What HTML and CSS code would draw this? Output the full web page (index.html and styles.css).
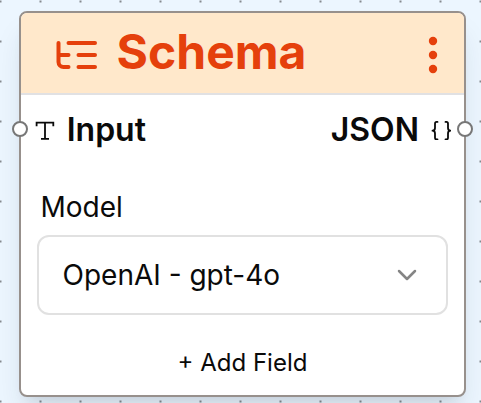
FILE: index.html
```
<!DOCTYPE html>
<html lang="en">
<head>
<meta charset="utf-8">
<title>Schema node</title>
<link rel="stylesheet" href="styles.css">
</head>
<body>
<main class="canvas">
  <section class="node">
    <header class="node-header">
      <svg class="tree-icon" width="42" height="30" viewBox="0 0 42 30">
        <path d="M3.500 3V22a5 5 0 0 0 5 5h5M3.500 15h10M13.500 3h26.500M23.500 15h16.500M23.500 27h16.500" />
      </svg>
      <h1 class="title">Schema</h1>
      <svg class="menu-icon" width="10" height="38" viewBox="0 0 10 38">
        <circle cx="5" cy="5" r="4.200"/><circle cx="5" cy="19" r="4.200"/><circle cx="5" cy="33" r="4.200"/>
      </svg>
    </header>
    <div class="ports">
      <span class="handle handle-in"></span>
      <svg class="type-icon" width="20" height="20" viewBox="0 0 20 20">
        <path d="M1.600 6.300V2.600h16.700V6.300M10 2.600v16.200M6 18.900h8" />
      </svg>
      <span class="port-label">Input</span>
      <span class="port-label port-out">JSON</span>
      <svg class="json-icon" width="20" height="20" viewBox="0 0 20 20">
        <path d="M6.500 1.900H5.600Q4 1.900 4 3.700V8Q4 10.700 1.500 10.700Q4 10.700 4 13.500V17.700Q4 19.400 5.600 19.400H6.500M14.500 1.900H15.400Q17 1.900 17 3.700V8Q17 10.700 19.500 10.700Q17 10.700 17 13.500V17.700Q17 19.400 15.400 19.400H14.500" />
      </svg>
      <span class="handle handle-out"></span>
    </div>
    <div class="field">
      <div class="field-label">Model</div>
      <div class="select">
        <span>OpenAI - gpt-4o</span>
        <svg class="chevron" width="20" height="12" viewBox="0 0 20 12"><path d="M2 2l8 8 8-8"/></svg>
      </div>
    </div>
    <div class="add-field">+ Add Field</div>
  </section>
</main>
</body>
</html>
```

FILE: styles.css
```
* { box-sizing: border-box; }
body {
  margin: 0;
  color: #0a0a0a;
  font-family: Inter, "Liberation Sans", sans-serif;
}
.canvas {
  width: 481px;
  height: 403px;
  overflow: hidden;
  padding: 11px 14px 0 19px;
  background: radial-gradient(circle at 20px 20px, #85898f 1px, transparent 1.5px) -19.500px -18.500px / 40px 40px #ecf6ff;
}
.node {
  width: 447px;
  height: 386px;
  border: 2px solid #97908c;
  border-radius: 8px;
  background: #fff;
  box-shadow: 0 20px 30px -6px rgba(30, 45, 60, .13), 0 8px 12px -8px rgba(30, 45, 60, .13);
}
.node-header {
  display: flex;
  align-items: center;
  height: 82px;
  padding: 0 26.5px 0 34px;
  border-bottom: 2px solid #e1e1e3;
  border-radius: 6px 6px 0 0;
  background: #ffe8cb;
  color: #e5400c;
}
.tree-icon, .type-icon, .json-icon, .chevron {
  flex: none;
  fill: none;
  stroke: currentColor;
  stroke-linecap: round;
  stroke-linejoin: round;
}
.tree-icon { stroke-width: 4; margin-top: 4px; }
.title {
  margin: -2px 0 0 19.6px;
  font-size: 48px;
  font-weight: 700;
  line-height: 60px;
}
.menu-icon { margin-left: auto; margin-top: 4px; fill: currentColor; }
.ports {
  position: relative;
  display: flex;
  align-items: center;
  height: 70px;
  padding: 0 13.5px 0 15px;
}
.handle {
  position: absolute;
  top: 26px;
  width: 16px;
  height: 16px;
  border: 2px solid #777;
  border-radius: 50%;
  background: #fff;
}
.handle-in { left: -9px; }
.handle-out { right: -9px; }
.type-icon { stroke-width: 1.8; stroke-linecap: butt; stroke-linejoin: miter; margin-left: -1px; }
.json-icon { stroke-width: 1.8; margin-left: 11.5px; }
.port-label { margin-left: 11.7px; font-size: 32px; font-weight: 600; line-height: 40px; }
.port-out { margin-left: auto; }
.field { padding: 24px 16px 0; }
.field-label { padding-left: 3.5px; font-size: 28px; line-height: 36px; }
.select {
  display: flex;
  align-items: center;
  justify-content: space-between;
  height: 80px;
  margin-top: 10px;
  padding: 0 29.5px 0 23.5px;
  border: 2px solid #e1e1e1;
  border-radius: 12px;
  font-size: 28px;
}
.chevron { color: #858585; stroke-width: 2.5; }
.add-field { margin-top: 32px; text-align: center; font-size: 24px; line-height: 32px; }
```
